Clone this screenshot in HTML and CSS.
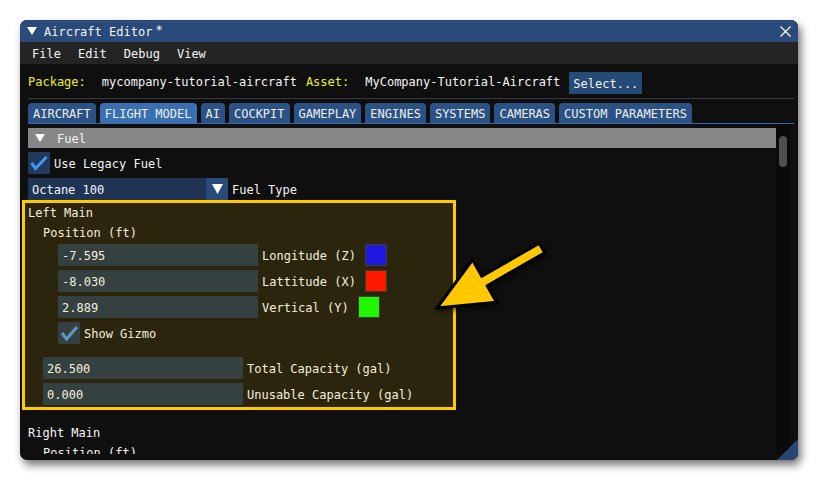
FILE: index.html
```html
<!DOCTYPE html>
<html>
<head>
<meta charset="utf-8">
<title>Aircraft Editor</title>
<link rel="stylesheet" href="styles.css">
</head>
<body>
<div class="window">
  <div class="titlebar">
    <svg class="tri" width="10" height="8" viewBox="0 0 10 8"><path d="M0 0H10L5 8Z" fill="#ffffff"/></svg>
    <span class="title">Aircraft Editor</span><span class="mod">*</span>
    <svg class="close" width="11" height="11" viewBox="0 0 11 11"><path d="M0.5 0.5L10.5 10.5M10.5 0.5L0.5 10.5" stroke="#ffffff" stroke-width="1.3"/></svg>
  </div>
  <div class="menubar">
    <span>File</span><span>Edit</span><span>Debug</span><span>View</span>
  </div>
  <div class="main">
    <div class="pkg">
      <span class="yl">Package:</span>
      <span class="val">mycompany-tutorial-aircraft</span>
      <span class="yl">Asset:</span>
      <span class="val">MyCompany-Tutorial-Aircraft</span>
      <button class="btn">Select...</button>
    </div>
    <div class="sep"></div>
    <div class="tabs">
      <span class="tab">AIRCRAFT</span>
      <span class="tab active">FLIGHT MODEL</span>
      <span class="tab">AI</span>
      <span class="tab">COCKPIT</span>
      <span class="tab">GAMEPLAY</span>
      <span class="tab">ENGINES</span>
      <span class="tab">SYSTEMS</span>
      <span class="tab">CAMERAS</span>
      <span class="tab">CUSTOM PARAMETERS</span>
    </div>
    <div class="scroll">
      <div class="list">
        <div class="header">
          <svg class="htri" width="10" height="8" viewBox="0 0 10 8"><path d="M0 0H10L5 8Z" fill="#ffffff"/></svg>
          <span class="t">Fuel</span>
        </div>
        <div class="row">
          <span class="chk legacy"><svg width="22" height="22" viewBox="0 0 22 22"><path d="M3.5 11L7.5 16.5L18.5 5" fill="none" stroke="#4296fa" stroke-width="3"/></svg></span>
          <span class="lbl">Use Legacy Fuel</span>
        </div>
        <div class="row">
          <span class="combo">Octane 100</span>
          <span class="combo-btn"><svg width="11" height="10" viewBox="0 0 11 10"><path d="M0 0H11L5.5 10Z" fill="#ffffff"/></svg></span>
          <span class="lbl">Fuel Type</span>
        </div>
        <div class="text">Left Main</div>
        <div class="text ind1">Position (ft)</div>
        <div class="row ind2">
          <span class="input">-7.595</span><span class="lbl">Longitude (Z)</span><span class="swatch blue"></span>
        </div>
        <div class="row ind2">
          <span class="input">-8.030</span><span class="lbl">Lattitude (X)</span><span class="swatch red"></span>
        </div>
        <div class="row ind2">
          <span class="input">2.889</span><span class="lbl">Vertical (Y)</span><span class="swatch green"></span>
        </div>
        <div class="row ind2">
          <span class="chk gizmo"><svg width="22" height="22" viewBox="0 0 22 22"><path d="M4 11L8.5 17L19 5" fill="none" stroke="#4a90dc" stroke-width="3"/></svg></span>
          <span class="lbl">Show Gizmo</span>
        </div>
        <div class="row ind1 gapped">
          <span class="input">26.500</span><span class="lbl">Total Capacity (gal)</span>
        </div>
        <div class="row ind1">
          <span class="input">0.000</span><span class="lbl">Unusable Capacity (gal)</span>
        </div>
        <div class="text next">Right Main</div>
        <div class="text ind1">Position (ft)</div>
      </div>
      <div class="scrollbar"><div class="grab"></div></div>
    </div>
  </div>
  <div class="grip"></div>
  <div class="highlight"></div>
  <svg class="arrow" width="130" height="90" viewBox="0 0 130 90">
    <polygon points="7,73 42.5,24.8 51.8,41.2 109.3,8.2 114.7,17.8 57.2,50.8 66.5,67.2" fill="#ffc800" stroke="#000000" stroke-width="3" stroke-linejoin="miter"/>
  </svg>
</div>
</body>
</html>
```

FILE: styles.css
```css
* { box-sizing: border-box; }
html, body { margin: 0; }
body {
  background: #ffffff;
  width: 818px;
  height: 481px;
  overflow: hidden;
  padding: 20px 0 0 20px;
  font-family: "DejaVu Sans Mono", "Liberation Mono", monospace;
  font-size: 12px;
  color: #f4f4f4;
}
.window {
  position: relative;
  width: 778px;
  height: 440px;
  border-radius: 7px;
  overflow: hidden;
  background: #0f0f0f;
  box-shadow: 3px 5px 8px rgba(0, 0, 0, 0.55);
  display: flex;
  flex-direction: column;
}
.titlebar {
  height: 22px;
  flex-shrink: 0;
  background: #294a7a;
  display: flex;
  align-items: center;
  padding-left: 7px;
}
.titlebar .tri { margin-right: 7px; }
.title { padding-top: 2px; }
.mod { margin-left: 3px; align-self: flex-start; margin-top: 3px; }
.close { margin-left: auto; margin-right: 7px; }
.menubar {
  height: 22px;
  flex-shrink: 0;
  background: #242424;
  display: flex;
  align-items: center;
  gap: 17px;
  padding-left: 12px;
}
.menubar span { padding-top: 2px; }
.main {
  flex: 1;
  min-height: 0;
  display: flex;
  flex-direction: column;
  padding: 0 4px 6px 8px;
}
.pkg {
  height: 34px;
  flex-shrink: 0;
  display: flex;
  align-items: center;
}
.pkg span { padding-top: 2px; }
.yl { color: #ecec2e; margin-right: 16px; }
.val { margin-right: 9px; }
.btn {
  align-self: flex-start;
  margin-top: 8px;
  height: 22px;
  padding: 0 4px;
  border: 0;
  background: #264a78;
  color: #f4f4f4;
  font: inherit;
  line-height: 24px;
}
.sep { height: 1px; flex-shrink: 0; background: #3a3a3e; }
.tabs {
  margin-top: 4px;
  flex-shrink: 0;
  display: flex;
  gap: 4px;
  height: 21px;
  border-bottom: 1px solid #3568a8;
}
.tab {
  height: 20px;
  line-height: 23px;
  padding: 0 5px;
  background: #2c5185;
  border-radius: 4px 4px 0 0;
  color: #ededed;
}
.tab.active { background: #3a6fb1; }
.scroll {
  flex: 1;
  min-height: 0;
  display: flex;
  margin-right: 4px;
}
.list {
  flex: 1;
  min-width: 0;
  overflow: hidden;
  padding-top: 4px;
  display: flex;
  flex-direction: column;
  gap: 4px;
}
.scrollbar {
  width: 14px;
  flex-shrink: 0;
  background: #0a0a0a;
  padding: 12px 3px 0;
}
.grab { height: 31px; background: #4f4f4f; border-radius: 4px; }
.header {
  height: 20px;
  flex-shrink: 0;
  background: #878787;
  display: flex;
  align-items: center;
  padding-left: 7px;
}
.header .t { padding-top: 2px; }
.htri { margin-right: 12px; }
.row { display: flex; align-items: center; height: 22px; flex-shrink: 0; }
.text { height: 16px; line-height: 18px; flex-shrink: 0; }
.ind1 { margin-left: 15px; }
.ind2 { margin-left: 30px; }
.gapped { margin-top: 9px; }
.next { margin-top: 15px; }
.lbl { margin-left: 4px; padding-top: 2px; }
.chk { width: 22px; height: 22px; flex-shrink: 0; display: block; }
.chk svg { display: block; }
.chk.legacy { background: #213a5c; }
.chk.gizmo { background: #1a2e4a; }
.combo {
  width: 178px;
  height: 22px;
  line-height: 24px;
  padding-left: 4px;
  background: #203556;
}
.combo-btn {
  width: 22px;
  height: 22px;
  background: #294b7b;
  display: flex;
  align-items: center;
  justify-content: center;
}
.input {
  width: 200px;
  height: 22px;
  line-height: 24px;
  padding-left: 4px;
  background: #1a2e4a;
  flex-shrink: 0;
}
.swatch {
  width: 22px;
  height: 22px;
  margin-left: 9px;
  border: 1px solid #2a2a2a;
}
.swatch.blue { background: #0000ff; }
.swatch.red { background: #ff0000; }
.swatch.green { background: #00ff00; }
.grip {
  position: absolute;
  right: 0;
  bottom: 0;
  width: 21px;
  height: 21px;
  background: #284674;
  clip-path: polygon(100% 0, 100% 100%, 0 100%);
}
.highlight {
  position: absolute;
  left: 2px;
  top: 180px;
  width: 434px;
  height: 210px;
  border: 3px solid #ffc800;
  background: rgba(255, 200, 0, 0.12);
  pointer-events: none;
}
.arrow {
  position: absolute;
  left: 410px;
  top: 215px;
  overflow: visible;
  filter: drop-shadow(2px 3px 2px rgba(0, 0, 0, 0.45));
}
```
